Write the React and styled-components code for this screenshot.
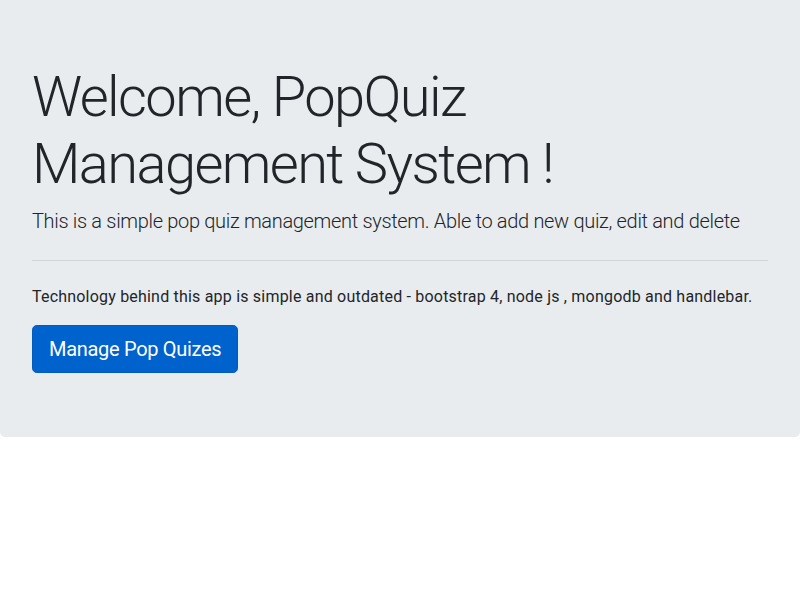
import React from "react";
import styled, { createGlobalStyle } from "styled-components";

const Global = createGlobalStyle`
  html, body { margin: 0; padding: 0; background: #fff; }
  body {
    font-family: Roboto, "Helvetica Neue", Arial, sans-serif;
    font-size: 16px;
    line-height: 1.5;
    color: #212529;
  }
  * { box-sizing: border-box; }
`;

const Jumbotron = styled.section`
  background: #e9ecef;
  padding: 64px 32px;
  border-radius: 0 0 4.8px 4.8px;
  margin-bottom: 32px;
`;

const Display = styled.h1`
  margin: 0 0 8px;
  font-size: 56px;
  font-weight: 300;
  line-height: 1.2;
  letter-spacing: -1.6px;
`;

const Lead = styled.p`
  margin: 0;
  font-size: 20px;
  font-weight: 300;
  line-height: 30px;
  letter-spacing: -0.32px;
`;

const Rule = styled.hr`
  margin: 24px 0;
  border: 0;
  border-top: 1px solid rgba(0, 0, 0, 0.1);
  height: 0;
`;

const Text = styled.p`
  margin: 0 0 16px;
  font-size: 16px;
  line-height: 24px;
  letter-spacing: 0.2px;
`;

const ButtonRow = styled.div`
  display: flex;
`;

const Button = styled.a`
  display: inline-block;
  background: #0062cc;
  border: 1px solid #005cbf;
  color: #fff;
  font-size: 20px;
  line-height: 30px;
  font-weight: 400;
  padding: 8px 16px;
  border-radius: 4.8px;
  text-decoration: none;
  letter-spacing: -0.3px;
`;

export default function App() {
  return (
    <>
      <Global />
      <Jumbotron>
        <Display>Welcome, PopQuiz Management System !</Display>
        <Lead>
          This is a simple pop quiz management system. Able to add new quiz, edit and delete
        </Lead>
        <Rule />
        <Text>
          Technology behind this app is simple and outdated - bootstrap 4, node js , mongodb and handlebar.
        </Text>
        <ButtonRow>
          <Button href="#">Manage Pop Quizes</Button>
        </ButtonRow>
      </Jumbotron>
    </>
  );
}
